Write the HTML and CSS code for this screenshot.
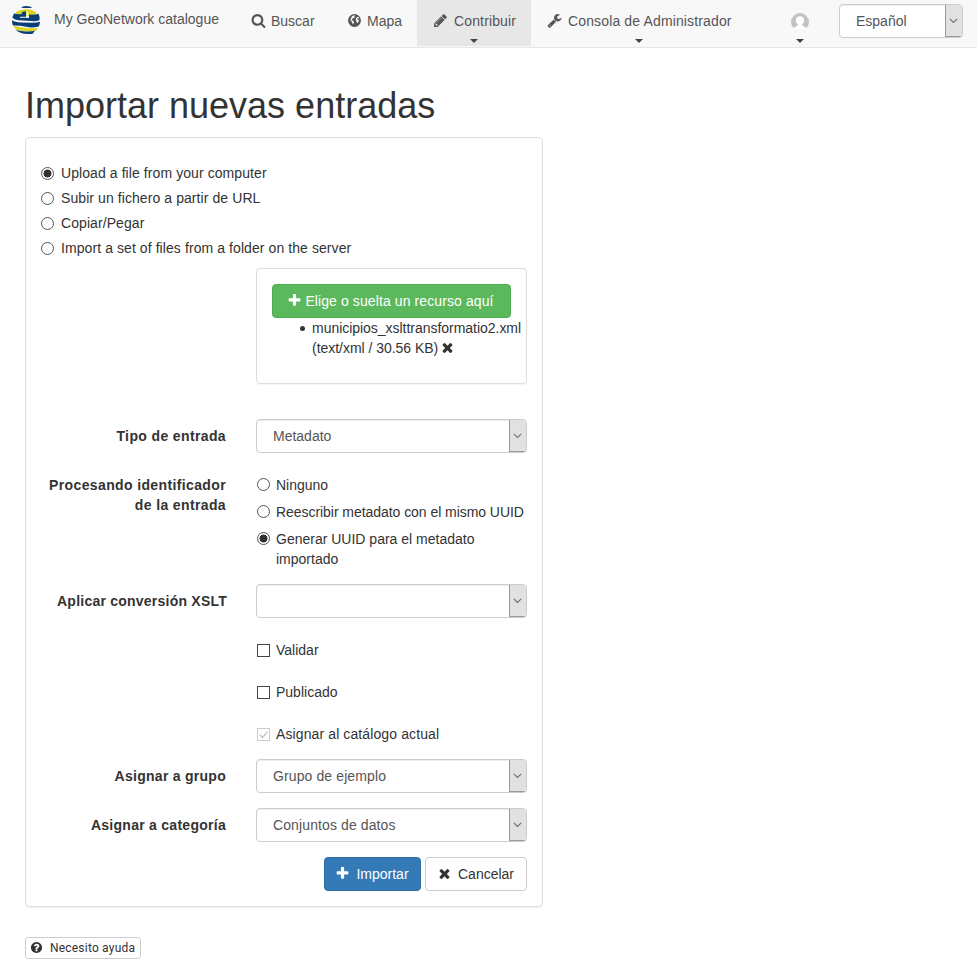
FILE: index.html
```html
<!DOCTYPE html>
<html lang="es">
<head>
<meta charset="utf-8">
<title>My GeoNetwork catalogue</title>
<link rel="stylesheet" href="styles.css">
</head>
<body>
<svg class="defs" width="0" height="0">
  <symbol id="plus" viewBox="0 0 1792 1792"><path d="M1600 736v192q0 40-28 68t-68 28h-416v416q0 40-28 68t-68 28h-192q-40 0-68-28t-28-68v-416h-416q-40 0-68-28t-28-68v-192q0-40 28-68t68-28h416v-416q0-40 28-68t68-28h192q40 0 68 28t28 68v416h416q40 0 68 28t28 68z"/></symbol>
  <symbol id="times" viewBox="0 0 1792 1792"><path d="M1490 1322q0 40-28 68l-136 136q-28 28-68 28t-68-28l-294-294-294 294q-28 28-68 28t-68-28l-136-136q-28-28-28-68t28-68l294-294-294-294q-28-28-28-68t28-68l136-136q28-28 68-28t68 28l294 294 294-294q28-28 68-28t68 28l136 136q28 28 28 68t-28 68l-294 294 294 294q28 28 28 68z"/></symbol>
  <symbol id="chevron" viewBox="0 0 9 6"><path d="M.8 .8 4.5 4.5 8.2 .8" fill="none" stroke="#707070" stroke-width="1.1"/></symbol>
</svg>
<nav class="navbar">
  <a class="brand">
    <svg class="logo" viewBox="0 0 28 28">
      <path fill="#0b3f78" d="M9 1.800Q10 .2 14 0q5 .2 6 1.800-5 .5-11 0z"/>
      <path fill="#d9d51c" d="M4 6q5-2.800 10-2.700 6 0 9.500 2.500l1 2.500-7 2H8L3 9z"/>
      <path fill="#0b3f78" d="M2 7.500Q7 9 10 7.800V6l4-.8v6.300q2 .5 3 0V8.500q6 .5 9.500-.8 1.500 3 1 6.500-4 1.300-8.500.8L6 14.300Q2 13.700.3 11.500z"/>
      <path fill="#f4f6f2" d="M14.500 5.300h1.700V11h-1.700zM8 10.700h9v1.100H8z"/>
      <path fill="#083d77" d="M0 14.300Q3 16.300 9 16.500l11 .2q5 0 8-1-.2 3-1.200 4.700Q20 22.300 14 20.800T1 19.500Q-.2 17 0 14.300z"/>
      <path fill="#d9d51c" d="M1.500 20q5 .8 10.500 1.700t14 .3l-2 2.800q-5 1-10 .5T4 23.800z"/>
      <path fill="#083d77" d="M4 24q5 1.300 10 1.400 4.500.3 9-.7l-2.300 3q-5 .7-10-.1Q7 27 4 24z"/>
    </svg>
    <span>My GeoNetwork catalogue</span>
  </a>
  <a class="nav-item search"><svg class="icon" viewBox="0 0 1792 1792"><path d="M1216 832q0-185-131.500-316.500t-316.500-131.500-316.500 131.500-131.500 316.500 131.500 316.500 316.500 131.500 316.500-131.500 131.500-316.500zm512 832q0 52-38 90t-90 38q-54 0-90-38l-343-342q-179 124-399 124-143 0-273.500-55.500t-225-150-150-225-55.500-273.500 55.500-273.500 150-225 225-150 273.500-55.500 273.500 55.500 225 150 150 225 55.500 273.500q0 220-124 399l343 343q37 37 37 90z"/></svg>Buscar</a>
  <a class="nav-item map"><svg class="icon" viewBox="0 0 14 14"><circle cx="7" cy="7" r="6"/><path fill="#f8f8f8" d="M4 4.200 5 2.800l2-.8.6.6-.8.900.4.600-1.400.6-.9.900-.6.900 1.300.8 1 1-.6 1.400-.8.700-.4-1.200-.6-1.500-1-1.200zM9.500 3.500l1.300.5.700 1.300-1-.1-1-.3-.5.500 1 .5 1 .8-.1 1.300-.8 1-.8.300-.5-1.600-.7-1.300.3-1.500z"/></svg>Mapa</a>
  <a class="nav-item contribute active"><span class="nav-line"><svg class="icon" viewBox="0 0 1792 1792"><path d="M491 1536l91-91-235-235-91 91v107h128v128h107zm523-928q0-22-22-22-10 0-17 7l-542 542q-7 7-7 17 0 22 22 22 10 0 17-7l542-542q7-7 7-17zm-54-192l416 416-832 832h-416v-416zm683 96q0 53-37 90l-166 166-416-416 166-165q36-38 90-38 53 0 91 38l235 234q37 39 37 91z"/></svg>Contribuir</span><i class="caret"></i></a>
  <a class="nav-item admin"><span class="nav-line"><svg class="icon" viewBox="0 0 1792 1792"><path d="M448 1472q0-26-19-45t-45-19-45 19-19 45 19 45 45 19 45-19 19-45zm644-420l-682 682q-37 37-90 37-52 0-91-37l-106-108q-38-36-38-90 0-53 38-91l681-681q39 98 114.500 173.500t173.500 114.500zm634-435q0 39-23 106-47 134-164.500 217.500t-258.500 83.500q-185 0-316.500-131.500t-131.500-316.500 131.500-316.500 316.500-131.500q58 0 121.500 16.500t107.500 46.500q16 11 16 28t-16 28l-293 169v224l193 107q5-3 79-48.500t135.500-81 70.500-35.500q15 0 23.500 10t8.500 25z"/></svg>Consola de Administrador</span><i class="caret"></i></a>
  <a class="nav-item user"><svg class="avatar" viewBox="0 0 18 18"><clipPath id="avatar-clip"><circle cx="9" cy="9" r="9"/></clipPath><g clip-path="url(#avatar-clip)"><path fill="#c3c3c3" d="M0 0h18v18H0z"/><path fill="#fff" d="M9 3.200c2.700 0 4.200 1.700 4 4.300-.1 1.900-.8 3.200-1.700 4.100v1.200c1.700.7 3.300 1.200 4.200 2.500L14 18H4l-1.500-2.700c.9-1.300 2.500-1.800 4.200-2.500v-1.200C5.800 10.700 5.100 9.400 5 7.500c-.2-2.600 1.300-4.300 4-4.300z"/></g></svg><i class="caret"></i></a>
  <div class="select lang"><span>Español</span><i class="drop"><svg class="chevron"><use href="#chevron"/></svg></i></div>
</nav>
<main class="page">
  <h1>Importar nuevas entradas</h1>
  <form class="panel">
    <div class="modes">
      <label><input type="radio" name="mode" checked>Upload a file from your computer</label>
      <label><input type="radio" name="mode">Subir un fichero a partir de URL</label>
      <label><input type="radio" name="mode">Copiar/Pegar</label>
      <label><input type="radio" name="mode">Import a set of files from a folder on the server</label>
    </div>
    <div class="upload">
      <span class="btn success"><svg class="icon"><use href="#plus"/></svg>Elige o suelta un recurso aquí</span>
      <ul><li>municipios_xslttransformatio2.xml<br>(text/xml / 30.56 KB) <svg class="icon"><use href="#times"/></svg></li></ul>
    </div>
    <div class="row type"><span class="row-label">Tipo de entrada</span><div class="select"><span>Metadato</span><i class="drop"><svg class="chevron"><use href="#chevron"/></svg></i></div></div>
    <div class="row ids"><span class="row-label">Procesando identificador<br>de la entrada</span>
      <div class="options">
        <label><input type="radio" name="uuid"><span>Ninguno</span></label>
        <label><input type="radio" name="uuid"><span class="tight">Reescribir metadato con el mismo UUID</span></label>
        <label><input type="radio" name="uuid" checked><span>Generar UUID para el metadato importado</span></label>
      </div>
    </div>
    <div class="row xslt"><span class="row-label">Aplicar conversión XSLT</span><div class="select"><span></span><i class="drop"><svg class="chevron"><use href="#chevron"/></svg></i></div></div>
    <div class="checks">
      <label><input type="checkbox"><span>Validar</span></label>
      <label><input type="checkbox"><span>Publicado</span></label>
      <label><span class="checked"><svg viewBox="0 0 13 13"><path d="M2 6.700 5.200 10 11.200 3.500" fill="none" stroke="#c4c4c4" stroke-width="1.500"/></svg></span><span class="wide">Asignar al catálogo actual</span></label>
    </div>
    <div class="row group"><span class="row-label">Asignar a grupo</span><div class="select"><span class="wide">Grupo de ejemplo</span><i class="drop"><svg class="chevron"><use href="#chevron"/></svg></i></div></div>
    <div class="row category"><span class="row-label">Asignar a categoría</span><div class="select"><span class="wide">Conjuntos de datos</span><i class="drop"><svg class="chevron"><use href="#chevron"/></svg></i></div></div>
    <div class="actions">
      <span class="btn primary"><svg class="icon"><use href="#plus"/></svg>Importar</span>
      <span class="btn default"><svg class="icon"><use href="#times"/></svg>Cancelar</span>
    </div>
  </form>
  <span class="help"><svg class="icon" viewBox="0 0 1792 1792"><path d="M1024 1376v-192q0-14-9-23t-23-9h-192q-14 0-23 9t-9 23v192q0 14 9 23t23 9h192q14 0 23-9t9-23zm256-672q0-88-55.500-163t-138.500-116-170-41q-243 0-371 213-15 24 8 42l132 100q7 6 19 6 16 0 25-12 53-68 86-92 34-24 86-24 48 0 85.500 26t37.500 59q0 38-20 61t-68 45q-63 28-115.500 86.500t-52.500 125.500v36q0 14 9 23t23 9h192q14 0 23-9t9-23q0-19 21.500-49.500t54.500-49.500q32-18 49-28.500t46-35 44.500-48 28-60.500 12.500-81zm384 192q0 209-103 385.500t-279.500 279.500-385.500 103-385.500-103-279.500-279.500-103-385.500 103-385.500 279.500-279.500 385.500-103 385.500 103 279.500 279.500 103 385.500z"/></svg><span>Necesito ayuda</span></span>
</main>
</body>
</html>
```
FILE: styles.css
```css
* { box-sizing: border-box; }
body {
  margin: 0;
  background: #fff;
  color: #333;
  font: 14px/20px "Liberation Sans", Arial, sans-serif;
}
.defs { display: none; }
.icon { width: 15px; height: 15px; fill: currentColor; flex: none; }
.wide { letter-spacing: .11px; }
.tight { letter-spacing: -.05px; }

/* Navigation */
.navbar {
  display: flex;
  height: 48px;
  background: #f8f8f8;
  border-bottom: 1px solid #e7e7e7;
  color: #555;
  white-space: nowrap;
}
.brand { display: flex; width: 235px; padding: 6px 0 0 12px; }
.brand span { margin: 3px 0 0 14px; }
.logo { width: 28px; height: 28px; flex: none; }
.nav-item { height: 46px; padding: 11px 0 0 16px; flex: none; }
.nav-item .icon { margin-right: 5px; vertical-align: -2px; }
.search { width: 96px; }
.map { width: 86px; }
.contribute { width: 114px; }
.admin { width: 245px; }
.contribute .icon, .admin .icon { margin-right: 6px; }
.nav-line { display: block; height: 20px; letter-spacing: .14px; }
.active { background: #e7e7e7; }
.caret {
  display: block;
  width: 8px;
  margin: 8px 0 0 37px;
  border: 4px solid transparent;
  border-top-color: #444;
  border-bottom: 0;
}
.admin .caret { margin-left: 88px; }
.user { width: 63px; padding: 13px 0 0 15px; }
.avatar { display: block; width: 18px; height: 18px; }
.user .caret { margin-left: 5px; }

.select {
  display: flex;
  justify-content: space-between;
  width: 271px;
  height: 34px;
  border: 1px solid #ccc;
  border-radius: 4px;
  background: #fff;
  box-shadow: inset 0 1px 1px rgba(0, 0, 0, .075);
  color: #555;
  overflow: hidden;
  flex: none;
}
.select span { padding: 6px 0 0 16px; }
.drop {
  display: flex;
  align-items: center;
  justify-content: center;
  width: 17px;
  padding-right: 1px;
  border-left: 1px solid #999;
  border-bottom: 1px solid #999;
  background: #e1e1e1;
}
.chevron { width: 9px; height: 6px; }
.lang { width: 124px; margin-top: 4px; }

/* Page */
.page { padding: 38px 25px 0; }
h1 { margin: 0 0 11px; font-size: 36px; font-weight: 400; line-height: 40px; }
.panel {
  width: 518px;
  height: 770px;
  padding: 25px 15px 0;
  border: 1px solid #ddd;
  border-radius: 4px;
  box-shadow: 0 1px 1px rgba(0, 0, 0, .05);
}
.modes label { display: flex; margin-bottom: 5px; letter-spacing: .08px; }
input {
  appearance: none;
  width: 13px;
  height: 13px;
  margin: 4px 7px 0 0;
  border: 1px solid #444;
  background: #fff;
  flex: none;
}
input[type="radio"] { border-color: #555; border-radius: 50%; }
input[type="radio"]:checked { background: radial-gradient(circle, #333 0 3.700px, #fff 4.300px); }
.upload {
  width: 271px;
  height: 116px;
  margin: 10px 0 0 215px;
  padding: 15px;
  border: 1px solid #ddd;
  border-radius: 4px;
  box-shadow: 0 1px 1px rgba(0, 0, 0, .05);
}
.btn {
  display: flex;
  align-items: center;
  justify-content: center;
  height: 34px;
  border: 1px solid;
  border-radius: 4px;
}
.btn .icon { margin: 0 6px 1px -1px; }
.success { background: #5cb85c; border-color: #4cae4c; color: #fff; letter-spacing: .1px; }
.success .icon { margin: 0 3px 1px -2px; }
.upload ul { margin: 0; padding-left: 40px; list-style: none; white-space: nowrap; letter-spacing: -.03px; }
.upload li::before {
  content: "";
  display: inline-block;
  width: 5px;
  height: 5px;
  margin: 0 7px 0 -12px;
  border-radius: 50%;
  background: #333;
  vertical-align: 2px;
}
.upload li .icon { vertical-align: -2px; margin-left: -2px; }

.row { display: flex; }
.row-label {
  width: 185px;
  margin-right: 30px;
  padding-top: 7px;
  font-weight: 700;
  letter-spacing: .37px;
  text-align: right;
  white-space: nowrap;
  flex: none;
}
.type { margin-top: 35px; }
.ids { margin-top: 15px; }
.options { padding: 7px 0 0 1px; }
.options label { display: flex; margin-bottom: 7px; }
.options input, .checks input { margin-right: 6px; }
.options input { margin-top: 3px; }
.xslt { margin-top: 8px; }
.xslt .row-label { width: 186px; margin-right: 29px; letter-spacing: .23px; }
.checks { margin: 22px 0 0 216px; }
.checks label { display: flex; height: 20px; margin-bottom: 22px; }
.checked { display: block; width: 13px; height: 13px; margin: 4px 6px 0 0; border: 1px solid #ccc; }
.checked svg { display: block; width: 11px; height: 11px; }
.group { margin-top: -7px; }
.group .row-label, .category .row-label { letter-spacing: .27px; }
.category { margin-top: 15px; }
.actions { display: flex; justify-content: flex-end; gap: 4px; margin: 15px 0 0; }
.primary { width: 97px; background: #337ab7; border-color: #2e6da4; color: #fff; }
.default { width: 102px; background: #fff; border-color: #ccc; }
.help {
  display: flex;
  align-items: center;
  width: 116px;
  height: 22px;
  margin-top: 30px;
  padding-left: 4px;
  border: 1px solid #ccc;
  border-radius: 3px;
  font: 12px/18px Roboto, sans-serif;
  letter-spacing: .2px;
  white-space: nowrap;
}
.help .icon { width: 13px; height: 13px; margin: 0 7px 1px 0; }
```
